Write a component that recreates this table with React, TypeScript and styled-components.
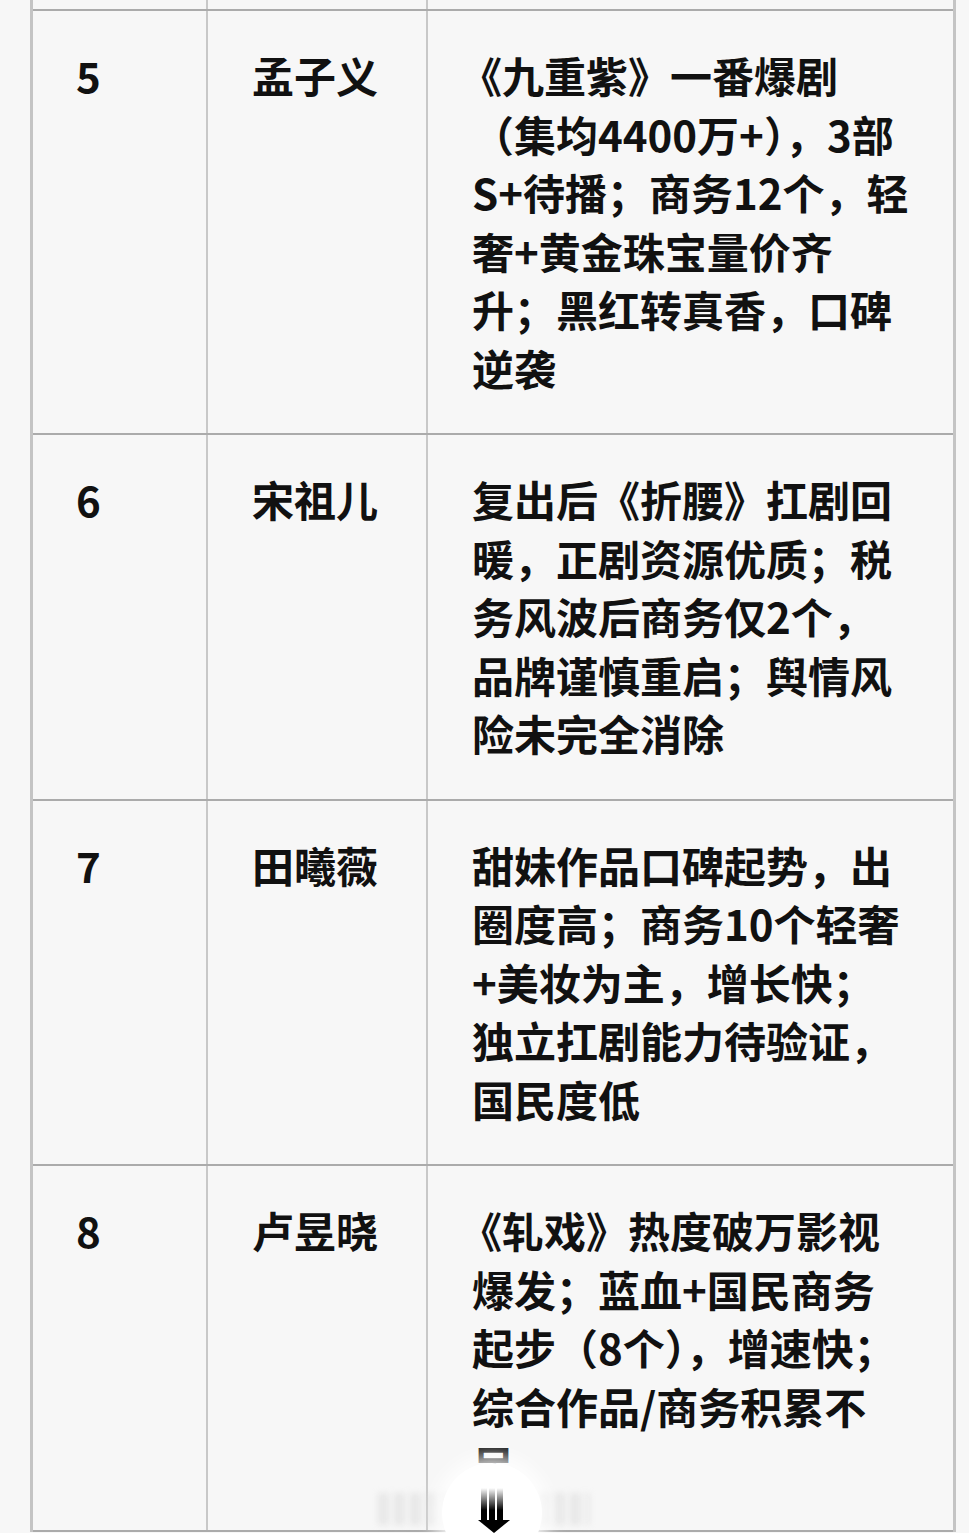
import React from "react";
import styled, { createGlobalStyle } from "styled-components";

const GlobalStyle = createGlobalStyle`
  html, body {
    margin: 0;
    padding: 0;
    background: #f7f7f7;
  }
  body {
    width: 969px;
    height: 1533px;
    overflow: hidden;
    font-family: "Noto Sans CJK SC", "Noto Sans", sans-serif;
  }
`;

const Page = styled.div`
  position: relative;
  width: 969px;
  height: 1533px;
  overflow: hidden;
  background: #f7f7f7;
  padding-left: 30px;
  box-sizing: border-box;
`;

const Table = styled.div`
  width: 926px;
  border-left: 3px solid #c4c4c4;
  border-right: 3px solid #c4c4c4;
  box-sizing: border-box;
`;

const Row = styled.div<{ $stub?: boolean }>`
  display: grid;
  grid-template-columns: 173px 220px 1fr;
  border-bottom: 2px solid #ababab;
  height: ${(p) => (p.$stub ? "11px" : "auto")};
  box-sizing: ${(p) => (p.$stub ? "border-box" : "content-box")};
`;

const Cell = styled.div<{ $first?: boolean; $pad?: number }>`
  border-left: ${(p) => (p.$first ? "none" : "2px solid #c8c8c8")};
  padding: 35px 20px 36px ${(p) => p.$pad ?? 44}px;
  font-size: 42px;
  line-height: 58.5px;
  font-weight: 700;
  color: #111111;
`;

const StubCell = styled.div<{ $first?: boolean }>`
  border-left: ${(p) => (p.$first ? "none" : "2px solid #c8c8c8")};
`;

const Line = styled.div`
  white-space: nowrap;
`;

const LeadBracket = styled.span`
  margin-left: -12px;
`;

const Overlay = styled.div`
  position: absolute;
  left: 442px;
  top: 1463px;
  width: 100px;
  height: 100px;
  border-radius: 50%;
  background: #ffffff;
  box-shadow: 0 0 18px 8px rgba(255, 255, 255, 0.85);
`;

const BlurBand = styled.div`
  position: absolute;
  left: 375px;
  top: 1493px;
  width: 215px;
  height: 32px;
  background: repeating-linear-gradient(
    90deg,
    rgba(200, 200, 200, 0) 0px,
    rgba(190, 190, 190, 0.35) 8px,
    rgba(230, 230, 230, 0.1) 16px
  );
  filter: blur(3px);
`;

const ArrowWrap = styled.svg`
  position: absolute;
  left: 474px;
  top: 1488px;
`;

type RowData = { no: string; name: string; lines: string[] };

const rows: RowData[] = [
  {
    no: "5",
    name: "孟子义",
    lines: [
      "《九重紫》一番爆剧",
      "（集均4400万+），3部",
      "S+待播；商务12个，轻",
      "奢+黄金珠宝量价齐",
      "升；黑红转真香，口碑",
      "逆袭",
    ],
  },
  {
    no: "6",
    name: "宋祖儿",
    lines: [
      "复出后《折腰》扛剧回",
      "暖，正剧资源优质；税",
      "务风波后商务仅2个，",
      "品牌谨慎重启；舆情风",
      "险未完全消除",
    ],
  },
  {
    no: "7",
    name: "田曦薇",
    lines: [
      "甜妹作品口碑起势，出",
      "圈度高；商务10个轻奢",
      "+美妆为主，增长快；",
      "独立扛剧能力待验证，",
      "国民度低",
    ],
  },
  {
    no: "8",
    name: "卢昱晓",
    lines: [
      "《轧戏》热度破万影视",
      "爆发；蓝血+国民商务",
      "起步（8个），增速快；",
      "综合作品/商务积累不",
      "足",
    ],
  },
];

function renderLine(l: string) {
  if (l.startsWith("《")) {
    return (
      <>
        <LeadBracket>《</LeadBracket>
        {l.slice(1)}
      </>
    );
  }
  return l;
}

export default function App() {
  return (
    <>
      <GlobalStyle />
      <Page>
        <Table>
          <Row $stub>
            <StubCell $first />
            <StubCell />
            <StubCell />
          </Row>
          {rows.map((r) => (
            <Row key={r.no}>
              <Cell $first $pad={43}>
                <Line>{r.no}</Line>
              </Cell>
              <Cell>
                <Line>{r.name}</Line>
              </Cell>
              <Cell>
                {r.lines.map((l, i) => (
                  <Line key={i}>{renderLine(l)}</Line>
                ))}
              </Cell>
            </Row>
          ))}
        </Table>
        <BlurBand />
        <Overlay />
        <ArrowWrap width="40" height="45" viewBox="0 0 40 45">
          <defs>
            <linearGradient id="fade" x1="0" y1="0" x2="0" y2="1">
              <stop offset="0" stopColor="#000" stopOpacity="0" />
              <stop offset="0.7" stopColor="#000" stopOpacity="1" />
            </linearGradient>
          </defs>
          <rect x="7" y="0" width="6" height="32" fill="url(#fade)" />
          <rect x="15" y="0" width="6" height="32" fill="url(#fade)" />
          <rect x="23" y="0" width="6" height="32" fill="url(#fade)" />
          <path d="M4 32 L36 32 L20 45 Z" fill="#000" />
        </ArrowWrap>
      </Page>
    </>
  );
}
